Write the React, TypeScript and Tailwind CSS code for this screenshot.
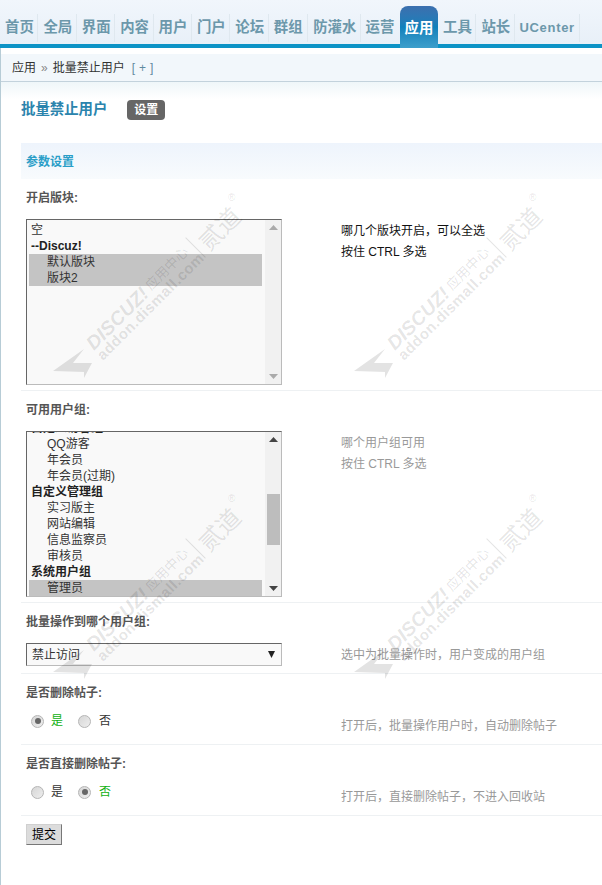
import React from "react";

const FONT = '"Liberation Sans","Noto Sans CJK SC",sans-serif';

const tabs = [
  { t: "首页", w: "w-[38.4px]" },
  { t: "全局", w: "w-[38.4px]" },
  { t: "界面", w: "w-[38.4px]" },
  { t: "内容", w: "w-[38.4px]" },
  { t: "用户", w: "w-[38.4px]" },
  { t: "门户", w: "w-[38.4px]" },
  { t: "论坛", w: "w-[38.4px]" },
  { t: "群组", w: "w-[39.4px]" },
  { t: "防灌水", w: "w-[52.4px]" },
  { t: "运营", w: "w-[39px]" },
];

function NavItem({ t, w, last }: { t: string; w: string; last?: boolean }) {
  return (
    <div className={`${w} h-[28px] pl-[5px] flex items-center shrink-0 whitespace-nowrap text-[14.4px] font-bold text-[#6c98ab] ${last ? "" : "border-r border-[#dfe8ef]"}`}>
      {t}
    </div>
  );
}

function Row({ label, tip, tipDark, children, h }: { label: string; tip: string[]; tipDark?: boolean; children: React.ReactNode; h: string }) {
  return (
    <div className={`ml-[21px] border-b border-[#eef1f3] ${h}`}>
      <div className="h-[36px] pl-[5px] pt-[1px] flex items-center text-[12px] font-bold text-[#555]">{label}</div>
      <div className="flex">
        <div className="w-[320px] shrink-0 pl-[5px]">{children}</div>
        <div className={`pt-[6px] text-[12px] leading-[21px] ${tipDark ? "text-[#111]" : "text-[#999]"}`}>
          {tip.map((x) => (
            <div key={x} className="whitespace-pre">{x}</div>
          ))}
        </div>
      </div>
    </div>
  );
}

function Opt({ t, group, sel }: { t: string; group?: boolean; sel?: boolean }) {
  return (
    <div className={`h-[16px] leading-[17px] text-[12px] whitespace-nowrap ${group ? "pl-[2px] font-bold text-[#222]" : "pl-[18px] text-[#333]"} ${sel ? "bg-[#c4c4c4]" : ""}`}>
      {t}
    </div>
  );
}

function ListBox({ children, top, thumb, dark }: { children: React.ReactNode; top?: string; thumb?: boolean; dark?: boolean }) {
  const arrow = dark ? "#444" : "#aaa";
  return (
    <div className="w-[256px] h-[166px] flex border border-t-[#666] border-l-[#666] border-r-[#bbb] border-b-[#bbb] bg-[#f9f9f9] overflow-hidden">
      <div className="w-[235px] shrink-0 pl-[2px] overflow-hidden">
        <div className={top ?? "mt-[2px]"}>{children}</div>
      </div>
      <div className="ml-[3px] w-[16px] bg-[#f1f1f1] flex flex-col items-center py-[5px]">
        <svg width="9" height="5" viewBox="0 0 9 5"><path d="M4.5 0 9 5H0z" fill={arrow} /></svg>
        {thumb && <div className="w-[13px] h-[51px] bg-[#bdbdbd] mt-[52px]" />}
        <svg className="mt-auto" width="9" height="5" viewBox="0 0 9 5"><path d="M4.5 5 9 0H0z" fill={arrow} /></svg>
      </div>
    </div>
  );
}

function Radio({ on }: { on?: boolean }) {
  return (
    <span className="w-[13px] h-[13px] rounded-full border border-[#b5b5b5] bg-gradient-to-br from-[#d6d6d6] to-[#eeeeee] flex items-center justify-center shrink-0">
      {on && <span className="w-[6px] h-[6px] rounded-full bg-[#666]" />}
    </span>
  );
}

function Radios({ yes }: { yes: boolean }) {
  return (
    <div className="flex items-center h-[24px] pl-[5px] mt-[-5px] text-[12px]">
      <Radio on={yes} />
      <span className={`ml-[7px] w-[27px] ${yes ? "text-[#10b010]" : "text-[#333]"}`}>是</span>
      <Radio on={!yes} />
      <span className={`ml-[8px] ${yes ? "text-[#333]" : "text-[#10b010]"}`}>否</span>
    </div>
  );
}

function Watermark({ pos }: { pos: string }) {
  return (
    <svg className={`absolute ${pos} pointer-events-none`} width="301" height="400" viewBox="0 0 301 400" aria-hidden="true">
      <g fill="#000" fillOpacity="0.11">
        <path d="M53 371 84 349 73 363 92 363 84 378 84 372z" />
        <text transform="translate(94 351) rotate(-45)" fontFamily='"Liberation Sans",sans-serif' fontStyle="italic" fontWeight="700" fontSize="19.5">DISCUZ!</text>
        <text transform="translate(151 291) rotate(-45)" fontFamily='"Noto Sans CJK SC",sans-serif' fontSize="13.5">应用中心</text>
        <rect x="-0.5" y="-14" width="1" height="28" transform="translate(195.5 247.5) rotate(-45)" />
        <text transform="translate(209 252) rotate(-45)" fontFamily='"Noto Sans CJK SC",sans-serif' fontSize="24">贰道</text>
        <text x="228" y="201" fontFamily='"Liberation Sans",sans-serif' fontSize="10">®</text>
        <text transform="translate(103 361) rotate(-45)" fontFamily='"Liberation Sans",sans-serif' fontWeight="700" fontSize="15" letterSpacing="0.5">addon.dismall.com</text>
      </g>
    </svg>
  );
}

export default function App() {
  return (
    <div className="relative w-[602px] h-[885px] bg-white overflow-hidden" style={{ fontFamily: FONT }}>
      {/* header */}
      <div className="h-[48px] bg-gradient-to-b from-[#f1f6fc] to-[#e8f0f8] border-b-[4px] border-[#0c93c6] flex items-end">
        <div className="flex items-center h-[28px] mb-[2px] w-[400px]">
          {tabs.map((x, i) => (
            <NavItem key={x.t} t={x.t} w={x.w} last={i === tabs.length - 1} />
          ))}
        </div>
        <div className="w-[38px] h-[42px] -mb-[4px] shrink-0 rounded-t-[8px] bg-gradient-to-b from-[#3b6fae] via-[#0e80bb] to-[#3d9fcb] flex items-start justify-center pt-[12px] text-[14.4px] leading-[20px] font-bold text-white">
          应用
        </div>
        <div className="flex items-center h-[28px] mb-[2px]">
          <NavItem t="工具" w="w-[38.4px]" />
          <NavItem t="站长" w="w-[39px]" />
          <div className="h-[28px] pl-[4px] pr-[4px] flex items-center border-r border-[#dfe8ef] text-[13px] tracking-[0.7px] font-bold text-[#6c98ab]">UCenter</div>
        </div>
      </div>

      <div className="border-l border-[#b7ccd6] h-[837px]">
        <div className="h-[6px]" />
        {/* breadcrumb */}
        <div className="h-[28px] bg-[#f2f7fb] border-b border-[#c3d2dc] pl-[11px] flex items-center text-[12px] text-[#333]">
          <span>应用</span>
          <span className="mx-[5px] text-[#888]">»</span>
          <span>批量禁止用户</span>
          <span className="ml-[7px] text-[#5f8aa0] tracking-[4px]">[+]</span>
        </div>
        <div className="h-[17px] -mb-[17px] bg-gradient-to-b from-[#eff6f9] to-white" />

        {/* title */}
        <div className="pt-[17px] pl-[20px] flex items-center h-[38px]">
          <span className="text-[14.4px] font-bold text-[#2b84ad]">批量禁止用户</span>
          <span className="ml-[20px] w-[38px] h-[20px] rounded-[4px] bg-[#666] text-white text-[12px] font-bold flex items-center justify-center">设置</span>
        </div>

        <div className="h-[23px]" />
        {/* section band */}
        <div className="ml-[20px] h-[36px] pl-[5px] pt-[1px] bg-gradient-to-b from-[#eef4fc] to-[#f8fbfd] flex items-center text-[12px] font-bold text-[#2a9ec8]">参数设置</div>

        <div className="-ml-px">
          <Row label="开启版块:" tip={["哪几个版块开启，可以全选", "按住 CTRL 多选"]} tipDark h="h-[212px]">
            <div className="mt-[4px]">
              <ListBox>
                <div className="h-[16px] leading-[17px] text-[12px] pl-[2px] text-[#333]">空</div>
                <Opt t="--Discuz!" group />
                <Opt t="默认版块" sel />
                <Opt t="版块2" sel />
              </ListBox>
            </div>
          </Row>
          <Row label="可用用户组:" tip={["哪个用户组可用", "按住 CTRL 多选"]} h="h-[212px]">
            <div className="mt-[4px]">
              <ListBox top="-mt-[12px]" thumb dark>
                <Opt t="自定义访客组" group />
                <Opt t="QQ游客" />
                <Opt t="年会员" />
                <Opt t="年会员(过期)" />
                <Opt t="自定义管理组" group />
                <Opt t="实习版主" />
                <Opt t="网站编辑" />
                <Opt t="信息监察员" />
                <Opt t="审核员" />
                <Opt t="系统用户组" group />
                <Opt t="管理员" sel />
              </ListBox>
            </div>
          </Row>
          <Row label="批量操作到哪个用户组:" tip={["选中为批量操作时，用户变成的用户组"]} h="h-[71px]">
            <div className="mt-[4px] w-[256px] h-[23px] border border-t-[#666] border-l-[#666] border-r-[#bbb] border-b-[#bbb] bg-[#f9f9f9] flex items-center justify-between pl-[5px] pr-[6px] text-[12px] text-[#333]">
              <span>禁止访问</span>
              <svg width="7" height="7" viewBox="0 0 7 7"><path d="M0 0H7L3.5 7z" fill="#222" /></svg>
            </div>
          </Row>
          <Row label="是否删除帖子:" tip={["打开后，批量操作用户时，自动删除帖子"]} h="h-[71px]">
            <div className="mt-[4px]"><Radios yes /></div>
          </Row>
          <Row label="是否直接删除帖子:" tip={["打开后，直接删除帖子，不进入回收站"]} h="h-[71px]">
            <div className="mt-[4px]"><Radios yes={false} /></div>
          </Row>
        </div>

        <div className="pl-[25px] pt-[8px]">
          <button className="w-[36px] h-[21px] bg-[#dcdcdc] border border-t-[#d0d0d0] border-l-[#d0d0d0] border-r-[#777] border-b-[#777] text-[12px] text-black flex items-center justify-center">提交</button>
        </div>
      </div>

      <Watermark pos="left-0 top-0" />
      <Watermark pos="left-[301px] top-0" />
      <Watermark pos="left-0 top-[301px]" />
      <Watermark pos="left-[301px] top-[301px]" />
    </div>
  );
}
